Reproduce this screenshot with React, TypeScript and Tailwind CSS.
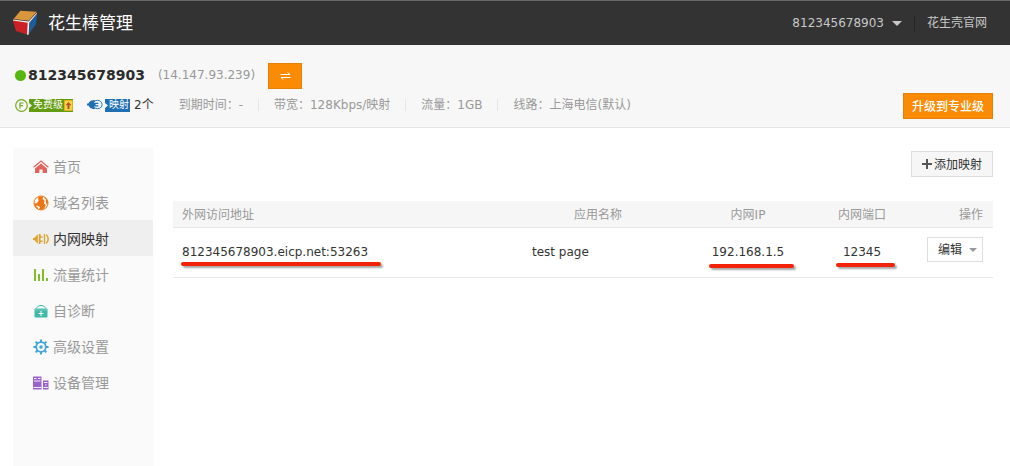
import type { ReactNode } from 'react';

type MenuItem = {
  label: string;
  icon: ReactNode;
  active?: boolean;
};

type Mapping = {
  address: string;
  name: string;
  ip: string;
  port: string;
};

const menuItems: MenuItem[] = [
  { label: '首页', icon: <HomeIcon /> },
  { label: '域名列表', icon: <GlobeIcon /> },
  { label: '内网映射', icon: <PlugIcon />, active: true },
  { label: '流量统计', icon: <ChartIcon /> },
  { label: '自诊断', icon: <KitIcon /> },
  { label: '高级设置', icon: <GearIcon /> },
  { label: '设备管理', icon: <DeviceIcon /> },
];

const stats = ['到期时间：-', '带宽：128Kbps/映射', '流量：1GB', '线路：上海电信(默认)'];

const mappings: Mapping[] = [
  { address: '812345678903.eicp.net:53263', name: 'test page', ip: '192.168.1.5', port: '12345' },
];

function Logo() {
  return (
    <svg width="26" height="26" viewBox="0 0 26 26" aria-hidden="true">
      <path d="M1 9.6 16.6 11.6 25 2.6 24.6 4.6 17.4 13 16.6 25 15 24.6 15.2 13.4 1 11Z" fill="#f5f1ee" />
      <path d="M1.6 9 8.4 0.8 24.8 1.8 16.6 10.8Z" fill="#d9963a" />
      <path d="M0.8 10.6 15.6 12.8 15 24.6 4 21Z" fill="#cb2026" />
      <path d="M17.6 12.4 25 3.8 24 14.2 17 23.8Z" fill="#1c5e9c" />
    </svg>
  );
}

function HomeIcon() {
  return (
    <svg width="16" height="16" viewBox="0 0 16 16" aria-hidden="true">
      <path d="M0.6 8.2 8 2 15.4 8.2" fill="none" stroke="#e0635c" strokeWidth="1.3" />
      <path d="M8 4.4 14 9.4V14H9.6V10.6H6.4V14H2V9.4Z" fill="#e0635c" />
    </svg>
  );
}

function GlobeIcon() {
  return (
    <svg width="16" height="16" viewBox="0 0 16 16" aria-hidden="true">
      <circle cx="8" cy="8" r="7" fill="#fffaf3" stroke="#ec7412" />
      <path
        d="M5 2.4Q8 0.6 10.4 1.8L9.4 3.8 11.4 5.6 11 8.4 12.8 10 11.2 13.6Q9 15.4 6 14.6L7 12 4.6 10.4 2.2 11 1 8.4 4 8.2 5.6 5.8Z"
        fill="#ec7412"
      />
      <path d="M11.4 2.2Q14.8 4.2 15 8L13.6 9.6 12.8 6.6 13 5Z" fill="#ec7412" />
      <path d="M1.2 9.6 4.4 12.2 5 14.4Q2 13 1.2 9.6Z" fill="#ec7412" />
    </svg>
  );
}

function PlugIcon() {
  return (
    <svg width="16" height="16" viewBox="0 0 16 16" fill="#dfa32c" aria-hidden="true">
      <path d="M0 7h1.4L4.8 3v10L1.4 9H0z" />
      <path d="M5.8 3h1.8v2.2h2v1.6h-2v2.6h2V11h-2v2H5.8z" />
      <path d="M10.8 3h1.4v10h-1.4z" />
      <path d="M13 3Q15.9 4.6 15.9 8T13 13v-1.6Q14.4 10.4 14.4 8T13 4.6z" />
    </svg>
  );
}

function ChartIcon() {
  return (
    <svg width="16" height="16" viewBox="0 0 16 16" fill="#82bd2b" aria-hidden="true">
      <path d="M1 2h2v12H1zM5 7h2v7H5zM9 2h2v12H9zM13 11h2v3h-2z" />
    </svg>
  );
}

function KitIcon() {
  return (
    <svg width="16" height="16" viewBox="0 0 16 16" aria-hidden="true">
      <path d="M3 5.4Q5 2.4 8 2.4T13 5.4" fill="none" stroke="#3fb8a8" />
      <rect x="1.5" y="5.5" width="13" height="9" rx="1" fill="#3fb8a8" />
      <path d="M1.5 7h13" stroke="#9cdcd3" strokeWidth="0.6" />
      <path d="M8 8v5M5.5 10.5h5" stroke="#fff" />
    </svg>
  );
}

function GearIcon() {
  return (
    <svg width="16" height="16" viewBox="0 0 16 16" fill="none" stroke="#42a4dc" aria-hidden="true">
      <circle cx="8" cy="8" r="4.8" strokeWidth="1.8" />
      <path
        d="M8 0.4v3M8 12.6v3M0.4 8h3M12.6 8h3M2.6 2.6l2.1 2.1M11.3 11.3l2.1 2.1M13.4 2.6l-2.1 2.1M4.7 11.3l-2.1 2.1"
        strokeWidth="2"
      />
      <circle cx="8" cy="8" r="1.8" fill="#42a4dc" stroke="none" />
    </svg>
  );
}

function DeviceIcon() {
  return (
    <svg width="16" height="16" viewBox="0 0 16 16" aria-hidden="true">
      <path d="M0 1.5h8.5v13H0zM10 5.5h5.5v9H10z" fill="#9a62cc" />
      <path d="M1 3.5h2.5M5 3.5h2.5M1 6h6.5M0.5 12.5h7.5M11 7.5h3.5M10.5 12.5h4.5M12 10h1.5" stroke="#f3eafa" />
    </svg>
  );
}

function FreeIcon() {
  return (
    <svg width="13" height="13" viewBox="0 0 13 13" fill="none" stroke="#6fa81c" aria-hidden="true">
      <circle cx="6.5" cy="6.5" r="5.8" strokeWidth="1.2" />
      <path d="M5 9.6V4h3.6M5 6.6h3" strokeWidth="1.2" />
    </svg>
  );
}

function MappingIcon() {
  return (
    <svg width="16" height="12" viewBox="0 0 16 12" aria-hidden="true">
      <ellipse cx="10.5" cy="5.5" rx="4.6" ry="4.2" fill="#eef5fb" stroke="#2a77b8" />
      <path d="M0 4.6h1.4Q2.6 1.4 6 1.2H8.4Q7 3 7 3.8H11.4V5H8.6V6.2H11.4V7.4H7Q7 8.4 8.4 10H6Q2.6 9.6 1.4 6.6H0z" fill="#1f6fb2" />
    </svg>
  );
}

// White arrow cut into the left edge of a badge
function Notch() {
  return (
    <svg className="mr-px" width="3" height="5" viewBox="0 0 3 5" fill="#f7f7f7" aria-hidden="true">
      <path d="M0 0 3 2.5 0 5z" />
    </svg>
  );
}

// Red marker stroke under an important value
function Marked({ children, line }: { children: ReactNode; line: string }) {
  return (
    <span className="relative inline-block">
      {children}
      <span
        className={`absolute h-1 rounded-full bg-[#f3230a] shadow-[2px_2px_2px_rgba(0,0,0,0.35)] ${line}`}
      />
    </span>
  );
}

function Header() {
  return (
    <header className="flex h-[45px] items-center border-t border-[#6a6a6a] bg-[#333] pr-[23px] pl-3">
      <Logo />
      <h1 className="ml-[10px] text-[17px] leading-6 text-white">花生棒管理</h1>
      <nav className="ml-auto flex items-center leading-4 text-[#c8c8c8]">
        <button type="button" aria-haspopup="menu" className="flex items-center gap-2">
          812345678903
          <svg width="10" height="5" viewBox="0 0 10 5" fill="#c8c8c8" aria-hidden="true">
            <path d="M0 0h10L5 5z" />
          </svg>
        </button>
        <span className="mr-3 ml-3 h-4 w-px bg-[#262626]" />
        <a href="#">花生壳官网</a>
      </nav>
    </header>
  );
}

function DeviceBar() {
  return (
    <section className="flex items-end justify-between border-b border-[#e4e4e4] bg-[#f7f7f7] pt-[18px] pr-[17px] pb-2 pl-[15px]">
      <div className="pb-[3px]">
        <div className="flex items-center">
          <div className="flex items-center pb-[2px] leading-5">
            <span className="h-[11px] w-[11px] rounded-full bg-[#54b80f]" />
            <strong className="ml-[2px] text-[14px] text-[#2b2b2b]">812345678903</strong>
            <span className="ml-[13px] text-[#999]">(14.147.93.239)</span>
          </div>
          <button
            type="button"
            aria-label="切换"
            className="ml-[13px] flex h-[26px] w-[34px] items-center justify-center border border-[#e58009] bg-[#fb8b05]"
          >
            <svg width="11" height="8" viewBox="0 0 11 8" fill="none" stroke="#fff" aria-hidden="true">
              <path d="M0.5 2.5h9.5L7.5 0.3M10.5 5.5H1L3.5 7.7" />
            </svg>
          </button>
        </div>
        <div className="mt-[5px] flex items-center py-[3px] leading-4 text-[#999]">
          <FreeIcon />
          <span className="ml-px flex h-[13px] items-center bg-[#639c10] text-[10px] leading-3 text-white">
            <Notch />
            免费级
            <svg className="ml-px" width="9" height="11" viewBox="0 0 9 11" aria-hidden="true">
              <path d="M0.5 0.5h8v10h-8z" fill="#f7d54a" stroke="#e0b020" />
              <path d="M4.5 2 1.5 5.2h2V9h2V5.2h2z" fill="#b3541e" />
            </svg>
          </span>
          <span className="ml-[14px] flex">
            <MappingIcon />
          </span>
          <span className="ml-[2px] flex h-[13px] items-center bg-[#1f6fb2] pr-px text-[10px] leading-3 text-white">
            <Notch />
            映射
          </span>
          <span className="ml-1 text-[#333]">2个</span>
          <ul className="ml-[10px] flex items-center divide-x divide-[#e6e6e6]">
            {stats.map((item) => (
              <li key={item} className="px-[15px] leading-3">
                {item}
              </li>
            ))}
          </ul>
        </div>
      </div>
      <button
        type="button"
        className="h-[26px] w-[90px] border border-[#e58009] bg-[#fb8b05] pt-px font-medium text-white"
      >
        升级到专业级
      </button>
    </section>
  );
}

function Sidebar() {
  return (
    <nav className="w-[140px] shrink-0 bg-[#fafafa]">
      <ul>
        {menuItems.map((item) => (
          <li key={item.label}>
            <a
              href="#"
              aria-current={item.active ? 'page' : undefined}
              className={`flex h-9 items-center gap-1 pt-[2px] pl-5 text-[14px] leading-5 ${
                item.active ? 'bg-[#efefef] text-[#333]' : 'text-[#999]'
              }`}
            >
              {item.icon}
              {item.label}
            </a>
          </li>
        ))}
      </ul>
    </nav>
  );
}

function MappingTable() {
  return (
    <table className="mt-6 w-full table-fixed border-collapse leading-4">
      <thead className="bg-[#f6f6f6] text-[#999]">
        <tr className="h-[26px] border-b border-[#e8e8e8]">
          <th className="px-[9px] pt-[2px] text-left font-normal">外网访问地址</th>
          <th className="w-[152px] pt-[2px] font-normal">应用名称</th>
          <th className="w-[148px] pt-[2px] font-normal">内网IP</th>
          <th className="w-20 pt-[2px] font-normal">内网端口</th>
          <th className="w-[91px] px-[10px] pt-[2px] text-right font-normal">操作</th>
        </tr>
      </thead>
      <tbody className="text-[#333]">
        {mappings.map((row) => (
          <tr key={row.address} className="h-[50px] border-b border-[#e8e8e8]">
            <td className="px-[9px]">
              <Marked line="top-[18px] -right-[13px] -left-px">{row.address}</Marked>
            </td>
            <td className="px-[10px]">{row.name}</td>
            <td className="text-center">
              <Marked line="top-5 -right-[10px] -left-[3px]">{row.ip}</Marked>
            </td>
            <td className="text-center">
              <Marked line="top-[19px] -right-[14px] -left-[7px]">{row.port}</Marked>
            </td>
            <td className="px-[10px] pb-[6px]">
              <div className="relative ml-auto w-14">
                <select
                  aria-label="操作"
                  className="block h-[25px] w-full appearance-none border border-[#ddd] bg-white pt-px pl-[10px] text-[#333]"
                >
                  <option>编辑</option>
                </select>
                <svg
                  className="pointer-events-none absolute top-[11px] right-[6px]"
                  width="8"
                  height="4"
                  viewBox="0 0 8 4"
                  fill="#999"
                  aria-hidden="true"
                >
                  <path d="M0 0h8L4 4z" />
                </svg>
              </div>
            </td>
          </tr>
        ))}
      </tbody>
    </table>
  );
}

export default function App() {
  return (
    <div className="flex min-h-screen flex-col bg-white font-['DejaVu_Sans','Noto_Sans_CJK_SC',sans-serif] text-[12px]">
      <Header />
      <DeviceBar />
      <main className="flex flex-1 gap-5 pt-5 pr-[17px] pl-[13px]">
        <Sidebar />
        <div className="min-w-0 flex-1 pt-[3px]">
          <button
            type="button"
            className="ml-auto flex h-[26px] w-[82px] items-center justify-center gap-[2px] border border-[#ddd] bg-[#f6f6f6] text-[#333]"
          >
            <svg width="10" height="10" viewBox="0 0 10 10" fill="#555" aria-hidden="true">
              <path d="M4 0h2v4h4v2H6v4H4V6H0V4h4z" />
            </svg>
            <span className="pt-px">添加映射</span>
          </button>
          <MappingTable />
        </div>
      </main>
    </div>
  );
}
